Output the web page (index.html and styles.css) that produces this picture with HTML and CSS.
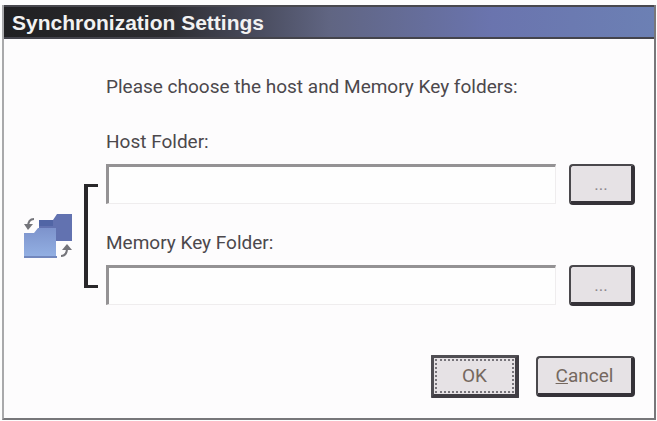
FILE: index.html
```html
<!DOCTYPE html>
<html lang="en">
<head>
    <meta charset="UTF-8">
    <meta name="viewport" content="width=device-width, initial-scale=1.0">
    <title>Synchronization Settings</title>
    <link rel="stylesheet" href="styles.css">
</head>
<body>
    <form class="dialog">
        <h1 class="title-bar">Synchronization Settings</h1>

        <div class="dialog-body">
            <p class="intro">Please choose the host and Memory Key folders:</p>

            <div class="folders">
                <div class="link">
                    <svg class="sync-icon" viewBox="0 0 50 46">
                        <defs>
                            <linearGradient id="front" x1="0" y1="0" x2="0" y2="1">
                                <stop offset="0" stop-color="#7d93cc"/>
                                <stop offset="1" stop-color="#93b0e3"/>
                            </linearGradient>
                        </defs>
                        <path d="M16 7h14l4-6h15v27H16z" fill="#6272b0"/>
                        <path d="M16 7h14v6H16z" fill="#5165a5"/>
                        <path d="M1 20h10l4-5h18v29H1z" fill="url(#front)"/>
                        <path d="M1 43h33v2H1z" fill="#7287bd"/>
                        <path d="M11 6C7 6 5 9 5 14" fill="none" stroke="#74747a" stroke-width="2"/>
                        <path d="M1 11h9l-5 6z" fill="#74747a"/>
                        <path d="M38 43c4 0 6-3 6-8" fill="none" stroke="#74747a" stroke-width="2"/>
                        <path d="M39 37h10l-5-6z" fill="#74747a"/>
                    </svg>
                    <div class="bracket"></div>
                </div>

                <div class="fields">
                    <div class="field">
                        <label for="host">Host Folder:</label>
                        <div class="field-row">
                            <input type="text" id="host">
                            <button type="button" class="browse" aria-label="Browse host folder">...</button>
                        </div>
                    </div>
                    <div class="field">
                        <label for="key">Memory Key Folder:</label>
                        <div class="field-row">
                            <input type="text" id="key">
                            <button type="button" class="browse" aria-label="Browse Memory Key folder">...</button>
                        </div>
                    </div>
                </div>
            </div>

            <div class="actions">
                <button type="submit" class="ok"><span>OK</span></button>
                <button type="button" class="cancel"><u>C</u>ancel</button>
            </div>
        </div>
    </form>
</body>
</html>
```
FILE: styles.css
```css
* {
    margin: 0;
    padding: 0;
    box-sizing: border-box;
}

body {
    padding: 5px 1px 1px 2px;
    background: #fdfdfd;
    color: #4c484c;
    font-family: Roboto, "Liberation Sans", Arial, sans-serif;
    font-size: 19px;
    line-height: 24px;
}

.dialog {
    border: 2px solid #77777a;
    border-top: none;
    border-left-color: #a9a9ab;
    background: #fdfcfd;
}

.title-bar {
    height: 34px;
    padding-left: 8px;
    border-top: 2px solid #48484e;
    border-bottom: 2px solid #44444c;
    background: linear-gradient(to right, #202022, #2c2c30 25%, #606582 50%, #6a74ae 75%, #6c80b4);
    color: #f2f2f2;
    font-family: "Liberation Sans", Arial, sans-serif;
    font-size: 21px;
    line-height: 32px;
}

.dialog-body {
    padding: 36px 19px 20px;
}

.intro {
    margin-left: 83px;
}

.folders {
    display: flex;
    margin-top: 31px;
}

.link {
    display: flex;
    align-items: center;
    gap: 11px;
    flex: 0 0 83px;
    padding: 54px 8px 18px 0;
}

.sync-icon {
    width: 50px;
    height: 46px;
}

.bracket {
    flex: 1;
    align-self: stretch;
    border: 3px solid #29272a;
    border-left-width: 4px;
    border-right: none;
}

.fields {
    display: flex;
    flex-direction: column;
    gap: 26px;
    flex: 1;
}

.field label {
    display: block;
    margin-bottom: 10px;
}

.field-row {
    display: flex;
    gap: 13px;
}

input {
    flex: 1;
    min-width: 0;
    height: 40px;
    padding: 0 8px;
    border: 1px solid #efedee;
    border-top: 3px solid #949294;
    border-left: 3px solid #949294;
    background: #fefefe;
    font: inherit;
    outline: none;
}

button {
    height: 41px;
    border: 2px solid #4a484c;
    border-right: 4px solid #353238;
    border-bottom: 4px solid #353238;
    border-radius: 4px;
    background: #e6e2e5;
    color: #75685f;
    font: inherit;
}

.browse {
    width: 66px;
    color: #8b868c;
    font-size: 17px;
}

.actions {
    display: flex;
    justify-content: flex-end;
    align-items: center;
    gap: 17px;
    margin-top: 49px;
}

.ok {
    width: 88px;
    height: 43px;
    padding: 1px;
    border: 3px solid #504e53;
    border-right: 4px solid #403d43;
    border-bottom: 4px solid #403d43;
    border-radius: 1px;
}

.ok span {
    display: block;
    height: 100%;
    border: 2px dotted #77747a;
    line-height: 30px;
}

.cancel {
    width: 99px;
}
```
